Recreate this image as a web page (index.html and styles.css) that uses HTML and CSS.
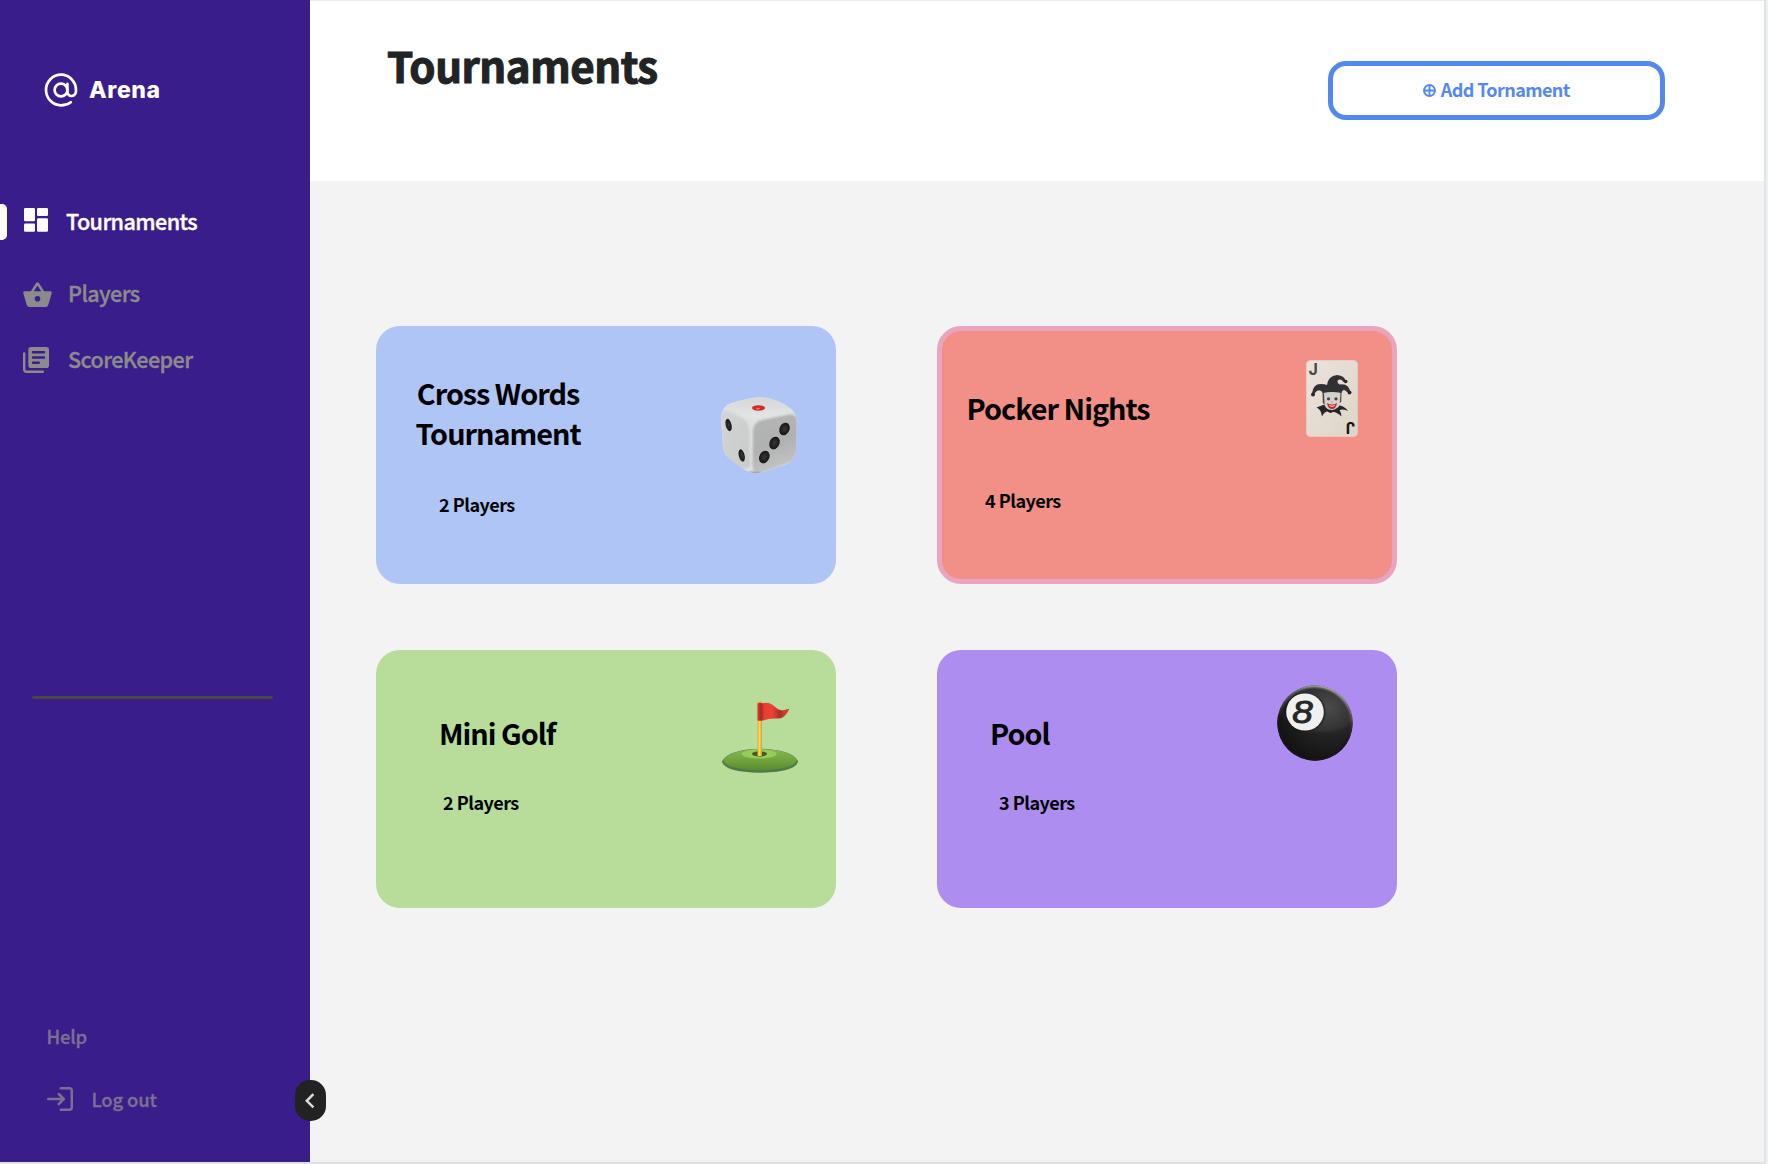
FILE: index.html
```html
<!DOCTYPE html>
<html lang="en">
<head>
<meta charset="utf-8">
<title>Arena - Tournaments</title>
<link rel="stylesheet" href="styles.css">
</head>
<body>
<div class="app">
  <aside class="sidebar">
    <div class="brand">
      <svg class="brand-mark" viewBox="0 0 34 34" fill="none" stroke="#fff" stroke-width="2.7" stroke-linecap="round">
        <circle cx="17" cy="17" r="6.4"/>
        <path d="M23.4 10.8V18.8C23.4 24.6 32 24.6 32 17.6V17A15 15.3 0 1 0 17 32.3C20.8 32.3 24.2 31.2 26.8 29.2"/>
      </svg>
      <span class="brand-name">Arena</span>
    </div>
    <nav class="nav">
      <a class="nav-item active">
        <svg class="icon-dash" viewBox="0 0 24 24" fill="#fff">
          <rect x="0" y="0" width="11" height="13.3" rx="1.3"/><rect x="13" y="0" width="11" height="8" rx="1.3"/>
          <rect x="0" y="15.6" width="11" height="8.2" rx="1.3"/><rect x="13" y="10.3" width="11" height="13.5" rx="1.3"/>
        </svg>
        <span>Tournaments</span>
      </a>
      <a class="nav-item players">
        <svg class="icon-basket" viewBox="0 0 29 25" fill="#8b8b8b" fill-rule="evenodd">
          <path d="M13.3.8Q14.5-.5 15.7.8L21.2 9.2H27.5Q29 9.4 28.8 11L25.3 22.8Q24.7 25 22.6 25H6.4Q4.300 25 3.700 22.800L.2 11Q0 9.400 1.500 9.200H7.800ZM14.500 3.500 10.800 9.200H18.200ZM14.500 14A2.800 2.800 0 1 0 14.500 19.600A2.800 2.800 0 1 0 14.500 14Z"/>
        </svg>
        <span>Players</span>
      </a>
      <a class="nav-item score">
        <svg class="icon-notes" viewBox="0 0 26 26" fill="none">
          <path d="M1.200 6.500V22.300Q1.200 24.800 3.700 24.800H19.800" stroke="#8b8b8b" stroke-width="2.400" stroke-linecap="round"/>
          <rect x="5.300" y="0" width="20.700" height="21" rx="2.800" fill="#8b8b8b"/>
          <path d="M10 5.300H21M10 10.500H21M10 15.700H15.800" stroke="#391d8a" stroke-width="2.400" stroke-linecap="round"/>
        </svg>
        <span>ScoreKeeper</span>
      </a>
    </nav>
    <hr class="divider">
    <div class="side-foot">
      <a class="foot-item help">Help</a>
      <a class="foot-item logout">
        <svg class="icon-out" viewBox="0 0 26 24" fill="none" stroke="#7a7092" stroke-width="2.500" stroke-linecap="round" stroke-linejoin="round">
          <path d="M1.200 12H16.500M11.800 7 16.800 12 11.800 17M13.800 1.300H22.300Q24.800 1.300 24.800 3.800V20.200Q24.800 22.700 22.300 22.700H13.800"/>
        </svg>
        <span>Log out</span>
      </a>
    </div>
    <button class="collapse" aria-label="Collapse sidebar">
      <svg viewBox="0 0 10 16" fill="none" stroke="#dcdcdc" stroke-width="2.500"><path d="M8.400 1.200 1.800 7.800 8.400 14.400"/></svg>
    </button>
  </aside>

  <main class="main">
    <header class="header">
      <h1>Tournaments</h1>
      <button class="add">
        <svg viewBox="0 0 13 13" fill="none" stroke="#5389ef" stroke-width="1.900"><circle cx="6.500" cy="6.500" r="5.500"/><path d="M6.500 1V12M1 6.500H12"/></svg>
        <span>Add Tornament</span>
      </button>
    </header>

    <section class="grid">
      <article class="card blue">
        <div class="info"><h2>Cross Words<br>Tournament</h2><p>2 Players</p></div>
        <svg class="art" viewBox="0 0 76 76">
          <defs>
            <linearGradient id="dieL" x1="0" y1="0" x2="1" y2="1"><stop offset="0" stop-color="#d3d5d4"/><stop offset="1" stop-color="#c9cbca"/></linearGradient>
            <linearGradient id="dieR" x1="0" y1="0" x2=".3" y2="1"><stop offset="0" stop-color="#b3b5b4"/><stop offset=".6" stop-color="#b0b2b1"/><stop offset="1" stop-color="#c2c4c3"/></linearGradient>
            <linearGradient id="dieT" x1="0" y1="0" x2="0" y2="1"><stop offset="0" stop-color="#d4d7d6"/><stop offset="1" stop-color="#e5e7e6"/></linearGradient>
            <radialGradient id="pip"><stop offset="0" stop-color="#383838"/><stop offset="1" stop-color="#151515"/></radialGradient>
            <filter id="dieSoft" x="-10%" y="-10%" width="120%" height="120%"><feGaussianBlur stdDeviation="1"/></filter>
            <clipPath id="dieClip"><path d="M10 6Q34-1 44 .6Q58 3 69 11Q75 15 75.700 23L75 53Q74 63 66 67L42 75Q32 78 24 73L9 62Q3 58 2 50L0 22Q0 10 10 6Z"/></clipPath>
          </defs>
          <g clip-path="url(#dieClip)">
            <rect width="76" height="76" fill="#dfe1e0"/>
            <g filter="url(#dieSoft)">
              <path d="M6 9Q28 0 43 0Q60 3 70 12Q74 16 66 17L37 21.500Q30 23 22 19L7 12Z" fill="url(#dieT)"/>
              <path d="M0 17Q2 11 10 15L21 21Q28 25 28.500 35L29 66Q29 74 20 71L2 60Z" fill="url(#dieL)"/>
              <path d="M32 35Q32 25 41 23L68 17.500Q77 17 77 26V62L42 76Q32 78 31.500 68Z" fill="url(#dieR)"/>
              <path d="M22 77 31 74.500 40 76V78Z" fill="#8b8f8d"/>
            </g>
          </g>
          <ellipse cx="37.500" cy="11" rx="6.500" ry="2.700" fill="#d52823"/><ellipse cx="37" cy="11.600" rx="2" ry=".9" fill="#e58a86"/>
          <g fill="url(#pip)">
            <ellipse cx="7.600" cy="28" rx="2.900" ry="6.300" transform="rotate(-14 7.600 28)"/>
            <ellipse cx="20.700" cy="58.500" rx="2.900" ry="6.300" transform="rotate(-14 20.700 58.500)"/>
            <ellipse cx="63.500" cy="32" rx="5" ry="6.500" transform="rotate(25 63.500 32)"/>
            <ellipse cx="53.500" cy="46" rx="5" ry="6.500" transform="rotate(25 53.500 46)"/>
            <ellipse cx="43.300" cy="60" rx="5" ry="6.500" transform="rotate(25 43.300 60)"/>
          </g>
        </svg>
      </article>

      <article class="card red">
        <div class="info"><h2>Pocker Nights</h2><p>4 Players</p></div>
        <svg class="art" viewBox="0 0 52 77">
          <defs><linearGradient id="paper" x1="0" y1="0" x2="1" y2="1"><stop offset="0" stop-color="#ebe3db"/><stop offset="1" stop-color="#ded5c9"/></linearGradient></defs>
          <rect x=".3" y=".3" width="51.400" height="76.400" rx="4.500" fill="url(#paper)" stroke="#e6cfc4" stroke-width=".6"/>
          <text class="joker-letter" x="2.600" y="14.500" fill="#4b4848">J</text>
          <text class="joker-letter" x="2.600" y="14.500" fill="#151515" transform="rotate(180 25.800 38.200)">J</text>
          <path d="M17 45 10.500 47.500Q15 49 16 56.500Q18.500 51.500 21.500 51.500Q24.500 54 26.500 52Q30.500 51.500 35.500 56.500Q35 52 33.500 50Q38 48.500 42 51Q38.500 46 33.500 45.500Z" fill="#252628"/>
          <path d="M16.500 32H35.500Q35 43 32.500 47Q28 50.500 25.500 50Q21 50 19 46Q17 43 16.500 32Z" fill="#d5d0c9"/>
          <path d="M16.500 32 16.800 43 18.600 45 18 33ZM35.500 32 35.200 42 33.800 43 34.500 33Z" fill="#4a4847"/>
          <path d="M6 33.500Q7 24 14.500 24Q19 24 21 25Q22 16 31 15Q39 15.500 40 22L37.500 22Q35 18 31.500 20.500Q31 23 33.500 24.500Q43 23 44 32L41 32Q37 27.500 35.500 33Q26 31 17 33Q13 27.500 8.500 33.500Z" fill="#303133"/>
          <circle cx="7" cy="34.500" r="2" fill="#252628"/><circle cx="39.700" cy="21.500" r="1.800" fill="#252628"/><circle cx="43.500" cy="32.500" r="2" fill="#252628"/>
          <circle cx="22.500" cy="38.800" r="1.600" fill="#394454"/><circle cx="30" cy="38.800" r="1.600" fill="#394454"/>
          <path d="M25.800 40.500 25 43H27.300Z" fill="#bcb5ad"/>
          <path d="M21 43Q22 49 26 49Q30 49 31 43Q26 46.200 21 43Z" fill="#c9252c"/>
          <path d="M23 45Q26 46.500 29.200 45Q29 46.800 26 46.800Q23.500 46.800 23 45Z" fill="#fff"/>
        </svg>
      </article>

      <article class="card green">
        <div class="info"><h2>Mini Golf</h2><p>2 Players</p></div>
        <svg class="art" viewBox="0 0 76 72">
          <defs>
            <linearGradient id="turf" x1="0" y1="0" x2="0" y2="1"><stop offset="0" stop-color="#86b852"/><stop offset=".6" stop-color="#6ca13a"/><stop offset="1" stop-color="#568b36"/></linearGradient>
            <linearGradient id="flag"><stop offset="0" stop-color="#d8392c"/><stop offset=".12" stop-color="#a52b27"/><stop offset=".22" stop-color="#e93f30"/><stop offset=".45" stop-color="#ec4232"/><stop offset=".7" stop-color="#a93028"/><stop offset=".85" stop-color="#d33a2c"/><stop offset="1" stop-color="#dd3a2c"/></linearGradient>
            <linearGradient id="pole"><stop offset="0" stop-color="#e5ad32"/><stop offset=".5" stop-color="#ffdb5a"/><stop offset="1" stop-color="#d6952c"/></linearGradient>
          </defs>
          <path d="M0 60Q1 71 38 71.800Q75 71 76 60Q70 49 40 47.800Q8 48 0 60Z" fill="#4f7c42"/>
          <path d="M1 59Q3 68 38 69.300Q73 68 75 59Q68 49 40 48Q9 48.500 1 59Z" fill="url(#turf)"/>
          <ellipse cx="37.200" cy="53" rx="17.500" ry="4.600" fill="#97cc57"/>
          <ellipse cx="37.500" cy="52.900" rx="7.500" ry="2.600" fill="#465a26"/>
          <rect x="35.500" y="1" width="4.400" height="54" fill="url(#pole)"/>
          <circle cx="38" cy="1.800" r="1.800" fill="#edb63b"/>
          <path d="M35.500 2.500Q38 1 40 2.200Q47 1 50 3.500C57 9 58 11 67.500 7.500Q63 18 56 17.500Q47 17 41 19.500Q38 20 35.500 19.500Z" fill="url(#flag)"/>
        </svg>
      </article>

      <article class="card purple">
        <div class="info"><h2>Pool</h2><p>3 Players</p></div>
        <svg class="art" viewBox="0 0 76 76">
          <defs>
            <radialGradient id="ball" cx=".68" cy=".3" r=".72"><stop offset="0" stop-color="#4b4b4b"/><stop offset=".5" stop-color="#2e2e2e"/><stop offset="1" stop-color="#131313"/></radialGradient>
            <linearGradient id="rim" x1=".7" y1="0" x2=".5" y2=".6"><stop offset="0" stop-color="#d0d0d0"/><stop offset=".35" stop-color="#777"/><stop offset="1" stop-color="#1c1c1c"/></linearGradient>
            <filter id="soft"><feGaussianBlur stdDeviation="1.100"/></filter>
            <clipPath id="ballClip"><circle cx="38" cy="38" r="37.700"/></clipPath>
          </defs>
          <g clip-path="url(#ballClip)">
            <rect width="76" height="76" fill="url(#ball)"/>
            <circle cx="38" cy="38" r="37.500" fill="none" stroke="url(#rim)" stroke-width="3" filter="url(#soft)"/>
            <path d="M76 35Q68 48 40 47Q20 47 0 30V76H76Z" fill="#151515" opacity=".4" filter="url(#soft)"/>
          </g>
          <ellipse cx="28.300" cy="27.200" rx="20.300" ry="19.200" fill="#111" opacity=".5"/>
          <ellipse cx="28" cy="27" rx="18.800" ry="18.600" fill="#f0f0f0"/>
          <text class="ball-number" x="15.200" y="38" fill="#272727" stroke="#272727" stroke-width=".9" textLength="20.500" lengthAdjust="spacingAndGlyphs">8</text>
        </svg>
      </article>
    </section>
  </main>
</div>
</body>
</html>
```
FILE: styles.css
```css
* { box-sizing: border-box; }

body {
  margin: 0;
  background: #eff0f6;
  font-family: "Noto Sans CJK SC", "Noto Sans", sans-serif;
  color: #000;
}

h1, h2, p { margin: 0; }
svg { display: block; flex: none; }
button { font: inherit; padding: 0; }

.app {
  display: flex;
  width: 1766px;
  height: 1164px;
  border-right: 2px solid #e0e2e6;
  border-bottom: 2px solid #e0e2e6;
}

.sidebar {
  position: relative;
  display: flex;
  flex-direction: column;
  flex: none;
  width: 310px;
  background: #391d8a;
}

.brand {
  display: flex;
  align-items: center;
  gap: 11px;
  height: 34px;
  margin: 73px 0 0 44px;
}
.brand-mark { width: 34px; height: 34px; }
.brand-name {
  font: 800 23px/34px Inter, sans-serif;
  letter-spacing: .6px;
  color: #fff;
}

.nav { margin-top: 97px; }
.nav-item {
  display: flex;
  align-items: center;
  height: 36px;
  font-size: 21.600px;
  font-weight: 500;
  line-height: 34px;
  letter-spacing: -.6px;
  -webkit-text-stroke: .35px currentColor;
  color: #8b8b8b;
}
.nav-item span { margin-bottom: 2px; }
.nav-item.active {
  color: #fff;
  gap: 18px;
}
.nav-item.active::before {
  content: "";
  width: 7px;
  height: 36px;
  margin-right: -1px;
  border-radius: 0 5px 5px 0;
  background: #fff;
}
.nav-item.players { margin-top: 36px; padding-left: 23px; gap: 16px; }
.nav-item.score { margin-top: 30px; padding-left: 23px; gap: 19px; }
.icon-dash { width: 24px; height: 24px; margin-bottom: 4px; }
.icon-basket { width: 29px; height: 25px; }
.icon-notes { width: 26px; height: 26px; }

.divider {
  width: 241px;
  height: 3px;
  margin: 318px 0 0 32px;
  border: 0;
  border-radius: 2px;
  background: #474747;
}

.side-foot {
  margin-top: 321px;
  padding-left: 46.500px;
  font-size: 18.500px;
  font-weight: 500;
  line-height: 32px;
  letter-spacing: -.2px;
  -webkit-text-stroke: .35px currentColor;
  color: #7a7092;
}
.foot-item { display: flex; align-items: center; height: 32px; }
.logout { margin-top: 31px; gap: 19px; }
.icon-out { width: 26px; height: 24px; }

.collapse {
  position: absolute;
  right: -16px;
  bottom: 41px;
  display: flex;
  align-items: center;
  justify-content: center;
  width: 31px;
  height: 41px;
  border: 0;
  border-radius: 15px;
  background: #222;
}
.collapse svg { width: 10px; height: 16px; margin-right: 1px; }

.main { flex: 1; background: #f3f3f3; }

.header {
  display: flex;
  justify-content: space-between;
  height: 181px;
  padding: 0 99px 0 77px;
  border-top: 1px solid #ebebeb;
  background: #fff;
}
.header h1 {
  margin-top: 34px;
  font-size: 42px;
  font-weight: 700;
  line-height: 60px;
  letter-spacing: -.45px;
  -webkit-text-stroke: 1.100px currentColor;
  color: #222325;
}
.add {
  display: flex;
  align-items: center;
  justify-content: center;
  gap: 4.500px;
  width: 337px;
  height: 59.500px;
  margin-top: 59.500px;
  padding-bottom: 1px;
  border: 5px solid #5389ef;
  border-radius: 18px;
  background: #fff;
  font-size: 18px;
  font-weight: 700;
  letter-spacing: -.6px;
  color: #5389ef;
}
.add svg { width: 13px; height: 13px; margin-top: 2px; }
.add span { margin-bottom: 1px; }

.grid {
  display: grid;
  grid-template-columns: 460px 460px;
  grid-template-rows: 258px 258px;
  gap: 66.500px 101px;
  padding: 144.500px 0 0 66px;
}
.card {
  display: flex;
  justify-content: space-between;
  align-items: flex-start;
  border-radius: 24px;
}
.card h2 { font-size: 28.800px; font-weight: 700; line-height: 40px; letter-spacing: -1px; }
.card p { font-size: 18px; font-weight: 700; line-height: 26px; letter-spacing: -.5px; }

.blue { padding: 47.500px 39px 0 39.500px; background: #afc5f6; }
.blue h2 { text-align: center; }
.blue p { margin: 38px 0 0 23.500px; }
.blue .art { width: 76px; height: 76px; margin-top: 24px; }

.red { padding: 57.500px 34px 0 24.500px; border: 5px solid #eba4be; background: #f28f87; }
.red p { margin: 59px 0 0 18.500px; }
.red .art { width: 52px; height: 77px; margin-top: -28px; }

.green { padding: 62.500px 38px 0 63px; background: #b8dd9b; }
.green p { margin: 36px 0 0 4px; }
.green .art { width: 76px; height: 72px; margin-top: -12px; }

.purple { padding: 62.500px 44px 0 53px; background: #ad8ef0; }
.purple p { margin: 36px 0 0 9px; }
.purple .art { width: 76px; height: 76px; margin-top: -28px; }

.joker-letter { font: 700 16px Inter, sans-serif; }
.ball-number { font: italic 400 31px "Liberation Sans", sans-serif; }
```
